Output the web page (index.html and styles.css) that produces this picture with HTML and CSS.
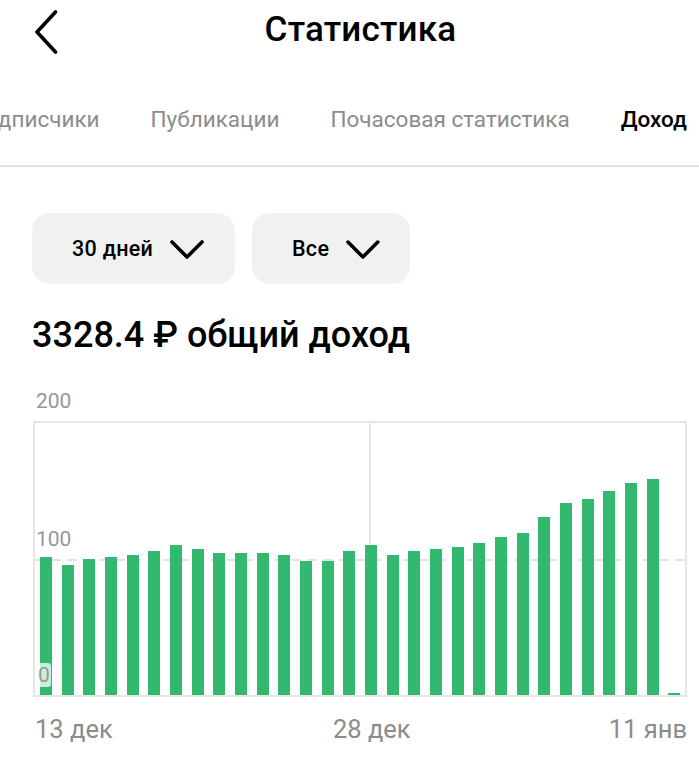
FILE: index.html
```html
<!DOCTYPE html>
<html lang="ru">
<head>
<meta charset="utf-8">
<title>Статистика</title>
<link rel="stylesheet" href="styles.css">
</head>
<body>
<header class="topbar">
  <div class="back">
    <svg width="26" height="46" viewBox="0 0 26 46"><path d="M21.5 2 L3 22 L21.5 42" fill="none" stroke="#000" stroke-width="3.6" stroke-linecap="round" stroke-linejoin="round"/></svg>
  </div>
  <h1 class="title">Статистика</h1>
</header>

<nav class="tabs">
  <div class="tab">Подписчики</div>
  <div class="tab">Публикации</div>
  <div class="tab">Почасовая статистика</div>
  <div class="tab active">Доход</div>
</nav>

<div class="filters">
  <div class="select select-days">
    <span>30 дней</span>
    <svg class="chev" width="34" height="20" viewBox="0 0 34 20"><path d="M2 2 L17 17 L32 2" fill="none" stroke="#000" stroke-width="3.6" stroke-linecap="round" stroke-linejoin="round"/></svg>
  </div>
  <div class="select select-all">
    <span>Все</span>
    <svg class="chev" width="34" height="20" viewBox="0 0 34 20"><path d="M2 2 L17 17 L32 2" fill="none" stroke="#000" stroke-width="3.6" stroke-linecap="round" stroke-linejoin="round"/></svg>
  </div>
</div>

<h2 class="total">3328.4 ₽ общий доход</h2>

<section class="chart">
  <div class="ylabel ymax">200</div>
  <div class="plot">
    <div class="vgrid"></div>
    <div class="hgrid"></div>
    <div class="bars">
      <div class="slot"><div class="bar" style="height:138px"></div></div>
      <div class="slot"><div class="bar" style="height:130px"></div></div>
      <div class="slot"><div class="bar" style="height:136px"></div></div>
      <div class="slot"><div class="bar" style="height:138px"></div></div>
      <div class="slot"><div class="bar" style="height:140px"></div></div>
      <div class="slot"><div class="bar" style="height:144px"></div></div>
      <div class="slot"><div class="bar" style="height:150px"></div></div>
      <div class="slot"><div class="bar" style="height:146px"></div></div>
      <div class="slot"><div class="bar" style="height:142px"></div></div>
      <div class="slot"><div class="bar" style="height:142px"></div></div>
      <div class="slot"><div class="bar" style="height:142px"></div></div>
      <div class="slot"><div class="bar" style="height:140px"></div></div>
      <div class="slot"><div class="bar" style="height:134px"></div></div>
      <div class="slot"><div class="bar" style="height:134px"></div></div>
      <div class="slot"><div class="bar" style="height:144px"></div></div>
      <div class="slot"><div class="bar" style="height:150px"></div></div>
      <div class="slot"><div class="bar" style="height:140px"></div></div>
      <div class="slot"><div class="bar" style="height:144px"></div></div>
      <div class="slot"><div class="bar" style="height:146px"></div></div>
      <div class="slot"><div class="bar" style="height:148px"></div></div>
      <div class="slot"><div class="bar" style="height:152px"></div></div>
      <div class="slot"><div class="bar" style="height:158px"></div></div>
      <div class="slot"><div class="bar" style="height:162px"></div></div>
      <div class="slot"><div class="bar" style="height:178px"></div></div>
      <div class="slot"><div class="bar" style="height:192px"></div></div>
      <div class="slot"><div class="bar" style="height:196px"></div></div>
      <div class="slot"><div class="bar" style="height:204px"></div></div>
      <div class="slot"><div class="bar" style="height:212px"></div></div>
      <div class="slot"><div class="bar" style="height:216px"></div></div>
      <div class="slot"><div class="bar" style="height:2px"></div></div>
    </div>
    <div class="ylabel ymid">100</div>
    <div class="ylabel yzero">0</div>
  </div>
  <div class="xaxis">
    <span class="xl x-first">13 дек</span>
    <span class="xl x-mid">28 дек</span>
    <span class="xl x-last">11 янв</span>
  </div>
</section>
</body>
</html>
```

FILE: styles.css
```css
* { box-sizing: border-box; }
html, body { margin: 0; padding: 0; background: #fff; }
body {
  width: 699px;
  font-family: Roboto, "Noto Sans", "DejaVu Sans", sans-serif;
  color: #000;
  overflow: hidden;
}

.topbar {
  display: flex;
  align-items: flex-start;
  height: 64px;
  padding-top: 10px;
}
.back {
  width: 70px;
  padding-left: 34px;
  line-height: 0;
}
.title {
  flex: 1;
  margin: 0 48px 0 0;
  text-align: center;
  font-size: 35px;
  font-weight: 500;
  line-height: 40px;
  letter-spacing: 0.2px;
}

.tabs {
  display: flex;
  justify-content: flex-end;
  gap: 51px;
  padding: 43px 12px 33px 0;
  border-bottom: 2px solid #e4e4e4;
  overflow: hidden;
  white-space: nowrap;
}
.tab {
  flex: none;
  font-size: 22.5px;
  line-height: 25px;
  color: #8c8c8c;
}
.tab.active {
  color: #000;
  font-weight: 500;
}

.filters {
  display: flex;
  gap: 17px;
  padding: 46px 0 0 32px;
}
.select {
  display: flex;
  align-items: center;
  gap: 17px;
  height: 71px;
  padding: 0 30px 0 40px;
  background: #f1f1f1;
  border-radius: 18px;
  font-size: 21.5px;
  font-weight: 500;
  letter-spacing: 0.3px;
}
.select-days { width: 203px; }
.select-all { width: 158px; }
.chev { display: block; margin-top: 2px; }

.total {
  margin: 29px 0 0 32px;
  font-size: 36px;
  font-weight: 500;
  line-height: 44px;
}

.chart {
  margin: 0 12px 0 33px;
}
.ylabel {
  font-size: 21px;
  line-height: 24px;
  color: #979797;
}
.ymax {
  margin-top: 32px;
  padding-left: 3px;
  height: 32px;
}
.plot {
  position: relative;
  height: 276px;
  border: 2px solid #e6e6e6;
}
.vgrid {
  position: absolute;
  top: 0;
  bottom: 0;
  left: calc(51.67% - 2px);
  width: 2px;
  background: #e6e6e6;
}
.hgrid {
  position: absolute;
  left: 0;
  right: 0;
  bottom: 134px;
  height: 2px;
  background: repeating-linear-gradient(90deg, #e2e2e2 0 10px, transparent 10px 16px);
}
.bars {
  position: relative;
  display: flex;
  align-items: flex-end;
  height: 100%;
}
.slot {
  flex: 1;
  display: flex;
  justify-content: center;
}
.bar {
  width: 12px;
  background: #33b96f;
}
.ymid {
  position: absolute;
  left: 1px;
  bottom: 144px;
}
.yzero {
  position: absolute;
  left: 2px;
  bottom: 8px;
  padding: 0 1px;
  background: rgba(255, 255, 255, 0.75);
  border-radius: 3px;
}

.xaxis {
  position: relative;
  display: flex;
  justify-content: space-between;
  padding-top: 18px;
}
.xl {
  font-size: 25.5px;
  line-height: 28px;
  color: #8c8c8c;
}
.x-first { padding-left: 2px; }
.x-mid {
  position: absolute;
  left: 51.8%;
  top: 18px;
  transform: translateX(-50%);
}
```
